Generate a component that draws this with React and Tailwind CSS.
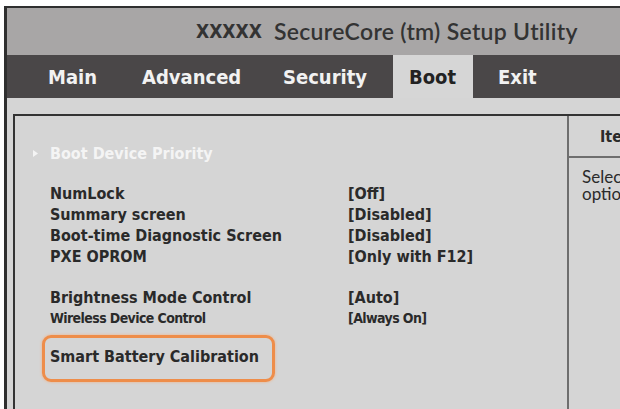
const bios = { fontFamily: '"DejaVu Sans Condensed", "DejaVu Sans", sans-serif' };
const soft = { fontFamily: 'Lato, "Open Sans", sans-serif' };

const tabs = [
  { label: "Main", w: "w-[101px]", pl: "pl-[26px]" },
  { label: "Advanced", w: "w-[135px]", pl: "pl-[19px]" },
  { label: "Security", w: "w-[135px]", pl: "pl-[25px]" },
  { label: "Boot", w: "w-[80px]", pl: "pl-[16px]", active: true },
  { label: "Exit", w: "w-[89px]", pl: "pl-[25px]" },
];

const groupOne = [
  ["NumLock", "[Off]"],
  ["Summary screen", "[Disabled]"],
  ["Boot-time Diagnostic Screen", "[Disabled]"],
  ["PXE OPROM", "[Only with F12]"],
];

function Row({ label, value, className = "" }) {
  return (
    <div className={`flex pl-[35px] ${className}`} style={bios}>
      <span className="w-[298px] shrink-0">{label}</span>
      <span>{value}</span>
    </div>
  );
}

export default function App() {
  return (
    <div className="w-[620px] h-[409px] overflow-hidden bg-white">
      <div className="ml-[4px] mt-[6px] w-[820px] h-[420px] border-l-[3px] border-t-2 border-[#2f2f2f] bg-[#d5d5d5]">
        {/* title */}
        <div className="h-[47px] bg-[#a8a6a6] flex items-center pl-[189px] gap-[12px] text-[#333]">
          <span className="text-[19px] font-bold" style={bios}>
            XXXXX
          </span>
          <span className="text-[23px] font-semibold tracking-[0.3px]" style={soft}>
            SecureCore (tm) Setup Utility
          </span>
        </div>

        {/* tabs */}
        <div className="h-[43px] bg-[#4a4748] flex pl-[15px]" style={bios}>
          {tabs.map((t) => (
            <div
              key={t.label}
              className={`${t.w} ${t.pl} flex items-center text-[20px] font-bold ${
                t.active ? "bg-[#d6d6d6] text-[#222]" : "text-[#f2f2f2]"
              }`}
            >
              {t.label}
            </div>
          ))}
        </div>

        <div className="pl-[6px] pt-[16px]">
          <div className="flex h-[320px] border-l-2 border-t-2 border-[#333]">
            {/* settings list */}
            <div className="w-[552px] shrink-0 text-[16px] leading-[21px] font-bold text-[#2a2a2a]">
              <div className="mt-[27px] flex items-center pl-[18px] text-[#f4f4f4]" style={bios}>
                <svg width="5" height="7" viewBox="0 0 5 7" className="mr-[12px]">
                  <path d="M0 0 L5 3.5 L0 7 Z" fill="#f4f4f4" />
                </svg>
                Boot Device Priority
              </div>

              <div className="mt-[19px]">
                {groupOne.map(([l, v]) => (
                  <Row key={l} label={l} value={v} />
                ))}
              </div>

              <div className="mt-[21px] leading-[20px]">
                <Row label="Brightness Mode Control" value="[Auto]" />
                <Row
                  label="Wireless Device Control"
                  value="[Always On]"
                  className="text-[14px] tracking-[-0.6px]"
                />
              </div>

              <div
                className="mt-[7px] ml-[27px] w-[233px] rounded-[9px] border-[3px] border-[#ee8d4a] pl-[5px] pt-[8px] pb-[12px] shadow-[0_0_3px_#f4b080]"
                style={bios}
              >
                Smart Battery Calibration
              </div>
            </div>

            {/* help pane */}
            <div className="flex-1 border-l-2 border-[#6e6e6e]">
              <div
                className="h-[42px] border-b-2 border-[#6e6e6e] pl-[31px] pt-[10px] text-[16px] leading-[21px] font-bold text-[#2a2a2a]"
                style={bios}
              >
                Item Specific Help
              </div>
              <div className="pl-[13px] pt-[10px] text-[17px] leading-[17px] text-[#2a2a2a]" style={soft}>
                <div>Select the boot</div>
                <div>options.</div>
              </div>
            </div>
          </div>
        </div>
      </div>
    </div>
  );
}
